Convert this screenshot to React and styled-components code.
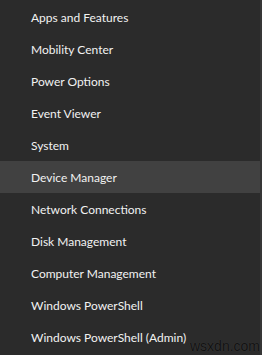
import React from "react";
import styled, { createGlobalStyle } from "styled-components";

const items = [
  "Apps and Features",
  "Mobility Center",
  "Power Options",
  "Event Viewer",
  "System",
  "Device Manager",
  "Network Connections",
  "Disk Management",
  "Computer Management",
  "Windows PowerShell",
  "Windows PowerShell (Admin)",
];

const Global = createGlobalStyle`
  html, body {
    margin: 0;
    background: #2b2b2b;
  }
`;

const Menu = styled.ul`
  position: relative;
  list-style: none;
  margin: 0;
  padding: 1px 0 0;
  width: 260px;
  height: 354px;
  background: #2b2b2b;
  border-right: 2px solid #363636;
  font-family: Lato, "Liberation Sans", sans-serif;
`;

const Item = styled.li`
  display: flex;
  align-items: center;
  height: 32px;
  padding-left: 31px;
  font-size: 12px;
  color: #f2f2f2;
  background: ${(p) => (p.$active ? "#414141" : "transparent")};
`;

const Watermark = styled.span`
  position: absolute;
  left: 190px;
  bottom: 1px;
  font-family: "Liberation Sans", Arial, sans-serif;
  font-size: 14px;
  color: #121212;
  text-shadow: 0 0 1px #444;
`;

const App = () => {
  return (
    <>
      <Global />
      <Menu>
        {items.map((item, i) => (
          <Item key={i} $active={item === "Device Manager"}>
            {item}
          </Item>
        ))}
        <Watermark>wsxdn.com</Watermark>
      </Menu>
    </>
  );
};

export default App;
